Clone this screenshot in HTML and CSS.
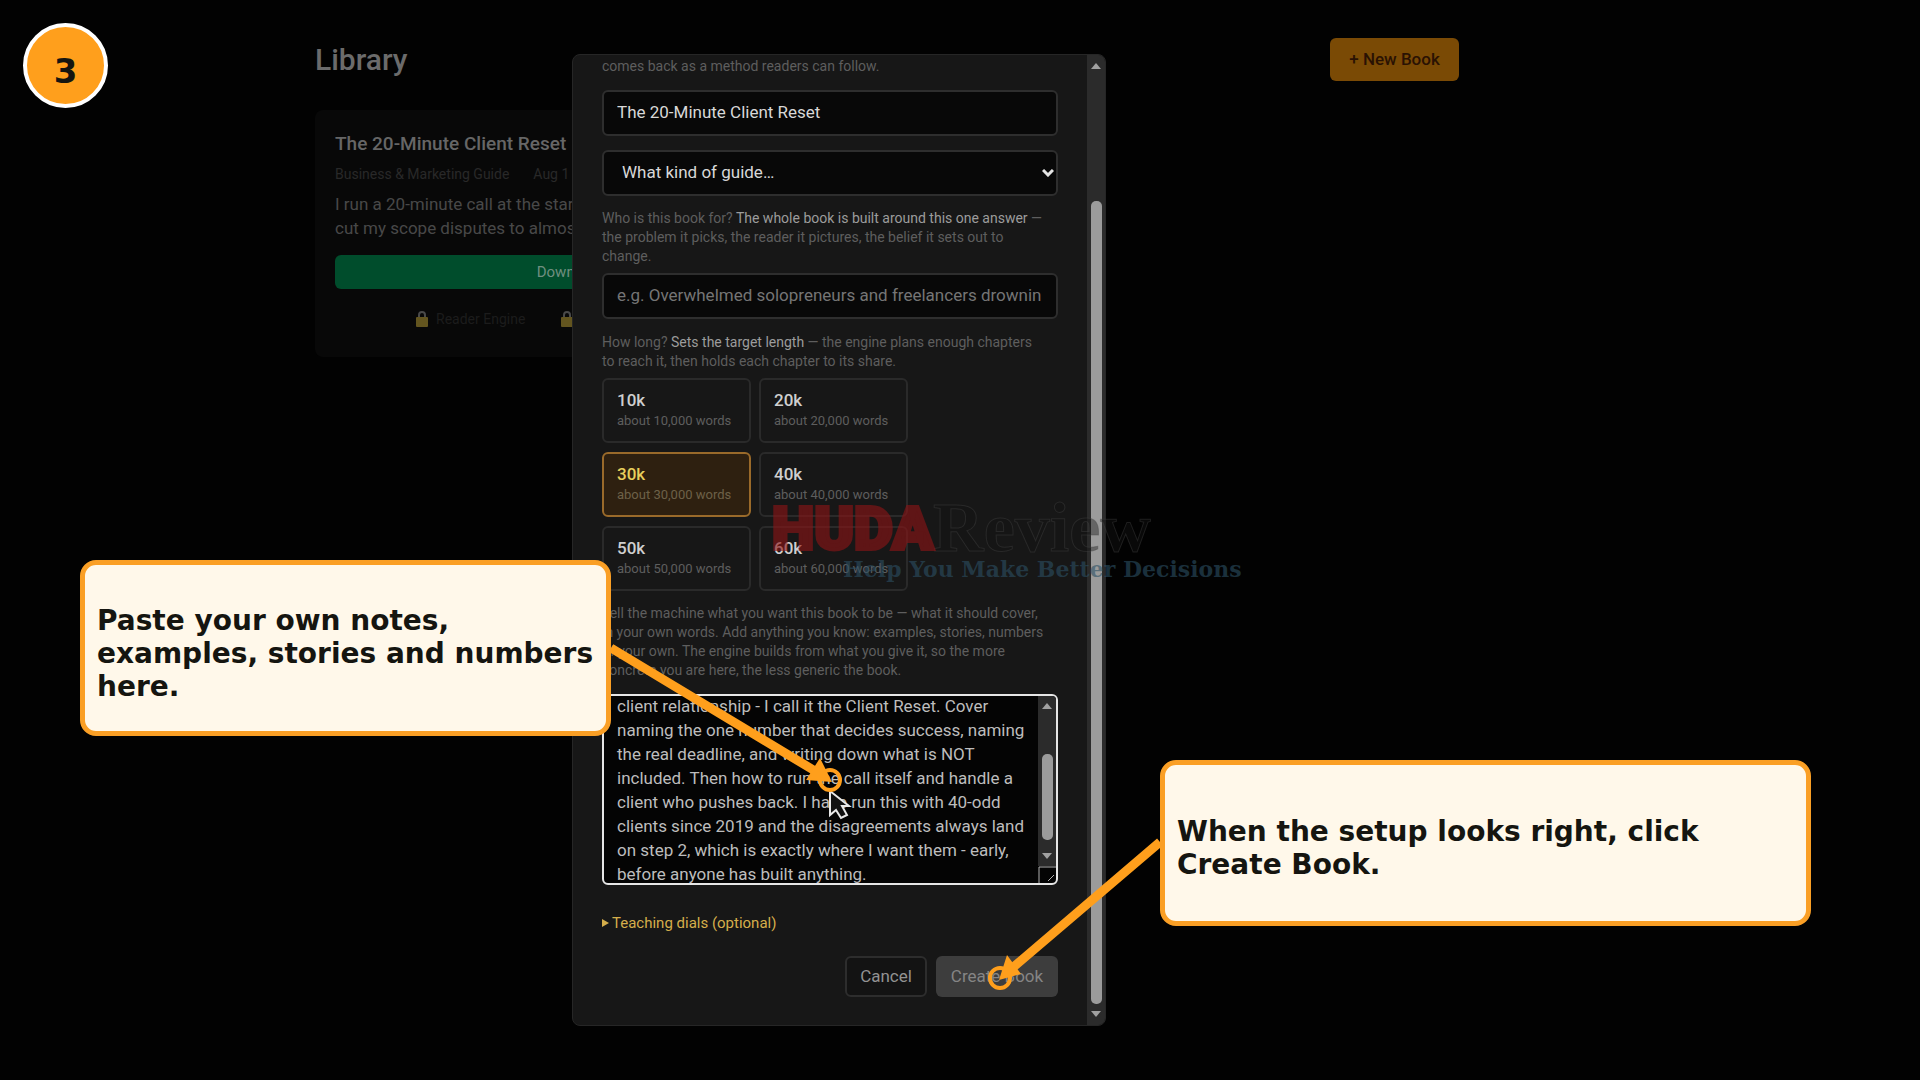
FILE: index.html
```html
<!DOCTYPE html>
<html lang="en">
<head>
<meta charset="utf-8">
<title>Library</title>
<link rel="stylesheet" href="styles.css">
</head>
<body>
<main class="library">
  <header class="library-head">
    <h1>Library</h1>
    <button class="new-book" type="button">+ New Book</button>
  </header>
  <section class="books">
    <article class="book">
      <h2>The 20-Minute Client Reset</h2>
      <p class="meta"><span>Business &amp; Marketing Guide</span><span>Aug 1</span></p>
      <p class="summary">I run a 20-minute call at the start<br>cut my scope disputes to almost</p>
      <button class="download" type="button">Download Book</button>
      <ul class="locked">
        <li><svg class="lock" viewBox="0 0 12 16"><path d="M3 7V4a3 3 0 0 1 6 0v3" fill="none" stroke="#4a4a4a" stroke-width="2"/><rect y="6" width="12" height="10" rx="1" fill="#63551f"/></svg>Reader Engine</li>
        <li><svg class="lock" viewBox="0 0 12 16"><path d="M3 7V4a3 3 0 0 1 6 0v3" fill="none" stroke="#4a4a4a" stroke-width="2"/><rect y="6" width="12" height="10" rx="1" fill="#63551f"/></svg>Audio</li>
      </ul>
    </article>
  </section>
</main>

<div class="overlay">
  <div class="modal" role="dialog" aria-label="New book">
    <form class="form">
      <p class="hint"><label for="title">comes back as a method readers can follow.</label></p>
      <input class="field title" id="title" type="text" value="The 20-Minute Client Reset">
      <div class="select-wrap">
        <select class="field" aria-label="What kind of guide"><option>What kind of guide…</option></select>
        <svg class="chevron" viewBox="0 0 12 8"><path d="M1 1l5 5 5-5" fill="none" stroke="#e4e4e4" stroke-width="3"/></svg>
      </div>
      <p class="hint"><label for="who">Who is this book for? <strong>The whole book is built around this one answer</strong> —<br>the problem it picks, the reader it pictures, the belief it sets out to<br>change.</label></p>
      <input class="field who" id="who" type="text" placeholder="e.g. Overwhelmed solopreneurs and freelancers drownin">
      <p class="hint">How long? <strong>Sets the target length</strong> — the engine plans enough chapters<br>to reach it, then holds each chapter to its share.</p>
      <div class="lengths">
        <button class="length" type="button"><b>10k</b><span>about 10,000 words</span></button>
        <button class="length" type="button"><b>20k</b><span>about 20,000 words</span></button>
        <button class="length chosen" type="button"><b>30k</b><span>about 30,000 words</span></button>
        <button class="length" type="button"><b>40k</b><span>about 40,000 words</span></button>
        <button class="length" type="button"><b>50k</b><span>about 50,000 words</span></button>
        <button class="length" type="button"><b>60k</b><span>about 60,000 words</span></button>
      </div>
      <p class="hint"><label for="notes">Tell the machine what you want this book to be — what it should cover,<br>in your own words. Add anything you know: examples, stories, numbers<br>of your own. The engine builds from what you give it, so the more<br>concrete you are here, the less generic the book.</label></p>
      <div class="notes">
        <textarea id="notes" rows="8" wrap="off">client relationship - I call it the Client Reset. Cover
naming the one number that decides success, naming
the real deadline, and writing down what is NOT
included. Then how to run the call itself and handle a
client who pushes back. I have run this with 40-odd
clients since 2019 and the disagreements always land
on step 2, which is exactly where I want them - early,
before anyone has built anything.</textarea>
        <div class="notes-side">
          <div class="bar"><i class="up"></i><i class="thumb"></i><i class="down"></i></div>
          <svg class="grip" viewBox="0 0 18 17"><path d="M1 17V1H18M10 15l6-6" fill="none" stroke="#b0b0b0"/></svg>
        </div>
      </div>
      <a class="dials" href="#dials"><svg viewBox="0 0 7 8"><path d="M0 0l7 4-7 4z" fill="#d5ae4b"/></svg>Teaching dials (optional)</a>
      <div class="actions">
        <button class="cancel" type="button">Cancel</button>
        <button class="create" type="button">Create Book</button>
      </div>
    </form>
    <div class="bar modal-bar"><i class="up"></i><i class="thumb"></i><i class="down"></i></div>
  </div>
</div>

<div class="watermark">
  <div class="brand"><span class="huda">HUDA</span><span class="review">Review</span></div>
  <div class="motto">Help You Make Better Decisions</div>
</div>

<svg class="arrows" width="1920" height="1080" viewBox="0 0 1920 1080">
  <path d="M830 791v24l6-5 5 8 6-3-5-9h7z" fill="#111" stroke="#e8e8e8" stroke-width="2"/>
  <g stroke="#ff9f1c" fill="none">
    <path d="M611 648L820 774M1160 842L1010 970" stroke-width="9"/>
    <circle cx="830" cy="780" r="10" stroke-width="4"/>
    <circle cx="1000" cy="978" r="10" stroke-width="4"/>
  </g>
  <path d="M832 782L806 780 820 758zM999 980L1007 955 1021 974z" fill="#ff9f1c"/>
</svg>
<div class="step">3</div>
<div class="callout callout-notes">Paste your own notes, examples, stories and numbers here.</div>
<div class="callout callout-create">When the setup looks right, click Create Book.</div>
</body>
</html>
```
FILE: styles.css
```css
* { box-sizing: border-box; }
body {
  margin: 0;
  min-height: 100vh;
  position: relative;
  overflow: hidden;
  background: #020202;
  color: #d8d8d8;
  font-family: Roboto, "Noto Sans", sans-serif;
  font-size: 17px;
}
h1, h2, p, ul { margin: 0; padding: 0; }
button, input, select, textarea { font: inherit; color: inherit; }
i { font-style: normal; }

/* library page behind the dialog */
.library { max-width: 1459px; padding: 38px 0 0 315px; }
.library-head { display: flex; justify-content: space-between; align-items: center; height: 43px; }
h1 { font-size: 30px; font-weight: 500; color: #6b6b6b; }
.new-book {
  width: 129px;
  height: 43px;
  padding: 0 0 2px;
  border: 0;
  border-radius: 6px;
  background: #7a4a05;
  color: #2a1203;
  font-size: 17px;
  font-weight: 500;
}
.books { display: grid; grid-template-columns: 1fr 1fr; gap: 48px; margin-top: 29px; }
.book { height: 247px; padding: 20px; background: #080808; border-radius: 8px; }
h2 { font-size: 19px; line-height: 28px; font-weight: 500; color: #666; white-space: nowrap; }
.meta { display: flex; gap: 24px; margin-top: 6px; font-size: 14px; line-height: 20px; color: #292929; }
.summary { margin-top: 8px; line-height: 24px; color: #484848; }
.download {
  width: 100%;
  height: 34px;
  margin-top: 15px;
  border: 0;
  border-radius: 6px;
  background: #004d2c;
  color: #6f8f80;
  font-size: 15px;
}
.locked { display: flex; gap: 36px; margin-top: 20px; padding-left: 81px; font-size: 14px; line-height: 20px; color: #1c1c1c; list-style: none; }
.locked li { display: flex; align-items: center; gap: 8px; }
.lock { width: 12px; height: 16px; }

/* dialog */
.overlay { position: absolute; inset: 0; display: flex; justify-content: center; align-items: center; padding-right: 242px; }
.modal {
  display: flex;
  width: 534px;
  height: 90vh;
  overflow: hidden;
  background: #171717;
  border: 1px solid #262626;
  border-radius: 8px;
}
.form { flex: 1; display: flex; flex-direction: column; padding: 2px 29px; min-width: 0; }
.hint { font-size: 14px; line-height: 19px; color: #5e5e5e; white-space: nowrap; }
.hint strong { color: #9c9c9c; font-weight: 400; }
.field { width: 100%; height: 46px; padding: 0 13px 2px; background: #080808; border: 2px solid #2e2e2e; border-radius: 6px; }
.field::placeholder { color: #757575; }
.title { margin: 14px 0; }
.select-wrap { display: flex; align-items: center; position: relative; margin-bottom: 13px; }
select.field { padding-left: 18px; appearance: none; }
.chevron { position: absolute; right: 4px; width: 12px; height: 8px; }
.who { margin: 7px 0 14px; }
.lengths { display: grid; grid-template-columns: 149px 149px; gap: 9px 8px; margin: 7px 0 13px; }
.length {
  display: flex;
  flex-direction: column;
  height: 65px;
  padding: 9px 13px;
  background: none;
  border: 2px solid #2a2a2a;
  border-radius: 6px;
  text-align: left;
  white-space: nowrap;
}
.length b { font-size: 17px; line-height: 22px; font-weight: 500; color: #cfcfcf; }
.length span { font-size: 13px; line-height: 20px; color: #5e5e5e; }
.chosen { background: #2e2010; border-color: #9a6a2a; }
.chosen b { color: #e8cf5c; }
.chosen span { color: #6d6048; }
.notes {
  display: flex;
  align-items: center;
  height: 191px;
  margin-top: 14px;
  overflow: hidden;
  background: #040404;
  border: 2px solid #e6e6e6;
  border-radius: 6px;
}
.notes textarea {
  flex: 1;
  min-width: 0;
  height: 192px;
  padding: 0 0 0 13px;
  border: 0;
  outline: 0;
  resize: none;
  overflow: hidden;
  background: none;
  line-height: 24px;
  color: #bdbdbd;
}
.notes-side { display: flex; flex-direction: column; width: 18px; height: 100%; }
.grip { width: 18px; height: 17px; }
.bar { flex: 1; display: flex; flex-direction: column; align-items: center; background: #2b2b2b; padding: 7px 0; }
.up, .down { border: 5px solid transparent; }
.up { border-top: 0; border-bottom: 6px solid #a0a0a0; }
.down { border-bottom: 0; border-top: 6px solid #a0a0a0; margin-top: auto; }
.thumb { width: 11px; height: 86px; margin-top: 45px; border-radius: 5px; background: #9b9b9b; }
.modal-bar { flex: 0 0 18px; padding: 8px 0; }
.modal-bar .thumb { flex: 1; margin: 132px 0 7px; }
.dials { display: flex; align-items: center; gap: 3px; margin-top: 28px; font-size: 15px; line-height: 20px; color: #d5ae4b; text-decoration: none; }
.dials svg { width: 7px; height: 8px; }
.actions { display: flex; justify-content: flex-end; gap: 9px; margin-top: 23px; }
.actions button { height: 41px; padding: 0 0 2px; border-radius: 6px; font-size: 17px; }
.cancel { width: 82px; background: #131313; border: 2px solid #2d2d2d; color: #929292; }
.create { width: 122px; background: #3d3d3d; border: 0; color: #858585; }

/* watermark */
.watermark { position: absolute; left: 772px; top: 500px; white-space: nowrap; }
.brand { display: flex; align-items: center; height: 56px; }
.huda { font-size: 60px; font-weight: 900; color: #8f1416; opacity: .6; -webkit-text-stroke: 4px #8f1416; }
.review { font: 700 70px "Liberation Serif", serif; color: rgba(20, 20, 20, .4); -webkit-text-stroke: 1px rgba(70, 70, 70, .4); }
.motto { padding-left: 71px; font: 700 22px/26px "DejaVu Serif", serif; color: rgba(44, 80, 100, .6); }

/* guide annotations */
.arrows { position: absolute; left: 0; top: 0; }
.step {
  position: absolute;
  left: 23px;
  top: 23px;
  width: 85px;
  height: 85px;
  padding-top: 10px;
  border: 4px solid #fff;
  border-radius: 50%;
  background: #ff9f1c;
  color: #151510;
  font: 700 34px/69px "DejaVu Sans", sans-serif;
  text-align: center;
}
.callout {
  position: absolute;
  display: flex;
  align-items: center;
  padding: 10px 10px 0 12px;
  background: #fff8ea;
  border: 5px solid #fa9f25;
  border-radius: 16px;
  color: #151510;
  font: 700 28px/33px "DejaVu Sans", sans-serif;
}
.callout-notes { left: 80px; top: 560px; width: 531px; height: 176px; }
.callout-create { left: 1160px; top: 760px; width: 651px; height: 166px; }
```
